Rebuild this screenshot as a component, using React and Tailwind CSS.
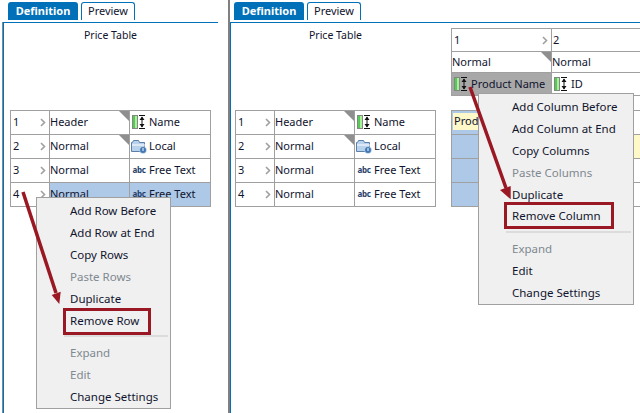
const font = { fontFamily: '"Noto Sans", "Liberation Sans", sans-serif' };

const rows = [
  { n: "1", type: "Header", icon: "resize", label: "Name", corner: true },
  { n: "2", type: "Normal", icon: "folder", label: "Local", corner: true },
  { n: "3", type: "Normal", icon: "abc", label: "Free Text" },
  { n: "4", type: "Normal", icon: "abc", label: "Free Text" },
];

const rowMenu = [
  [
    { label: "Add Row Before" },
    { label: "Add Row at End" },
    { label: "Copy Rows" },
    { label: "Paste Rows", off: true },
    { label: "Duplicate" },
    { label: "Remove Row", box: "w-[88px] -ml-[7px] pl-[4px]" },
  ],
  [
    { label: "Expand", off: true },
    { label: "Edit", off: true },
    { label: "Change Settings" },
  ],
];

const colMenu = [
  [
    { label: "Add Column Before" },
    { label: "Add Column at End" },
    { label: "Copy Columns" },
    { label: "Paste Columns", off: true },
    { label: "Duplicate" },
    { label: "Remove Column", box: "w-[110px] -ml-[8px] pl-[5px] -mt-[3px]" },
  ],
  [
    { label: "Expand", off: true },
    { label: "Edit" },
    { label: "Change Settings" },
  ],
];

function ResizeIcon() {
  return (
    <svg width="16" height="16" viewBox="0 0 16 16" className="shrink-0">
      <rect x="1.5" y="1.5" width="5" height="13" fill="#a8f09a" stroke="#808880" />
      <rect x="2" y="2" width="2" height="12" fill="#58c858" />
      <path d="M8 1.5h6M8 14.5h6M11 3v10" stroke="#111" fill="none" />
      <path d="M11 2.5L8.5 6h5zM11 13.5L8.5 10h5z" fill="#111" />
    </svg>
  );
}

function FolderIcon() {
  return (
    <svg width="16" height="16" viewBox="0 0 16 16" className="shrink-0">
      <path d="M0.5 4.5h1l1-2h5l1 2h5v9h-13z" fill="#b9d2ec" stroke="#5a7fa8" />
      <path d="M1 7h13" stroke="#fff" />
      <circle cx="12" cy="12" r="3.5" fill="#3f78b5" stroke="#fff" strokeWidth="0.5" />
      <path d="M12 10v3" stroke="#fff" />
    </svg>
  );
}

function AbcIcon() {
  return <span className="w-4 shrink-0 text-center text-[8px] font-bold leading-none tracking-[-0.3px] text-[#24406a]">abc</span>;
}

function Chevron() {
  return (
    <svg width="6" height="9" viewBox="0 0 6 9" className="shrink-0">
      <path d="M1 1l3.5 3.5L1 8" stroke="#a0a0a0" strokeWidth="1.6" fill="none" />
    </svg>
  );
}

function Corner() {
  return (
    <svg width="10" height="10" viewBox="0 0 10 10" className="absolute right-0 top-0">
      <path d="M0 0h10v10z" fill="#8f8f8f" />
    </svg>
  );
}

function Tabs({ className }) {
  return (
    <div className={`flex h-[22px] items-start pt-[2px] text-[#10142e] ${className}`} style={font}>
      <div className="flex h-[18px] w-[70px] items-center justify-center rounded-t-[3px] bg-[#0070b8] text-[11px] font-bold text-white">Definition</div>
      <div className="ml-[3px] flex h-[18px] w-[54px] items-center justify-center rounded-t-[3px] border border-b-0 border-[#0070b8] bg-white text-[11px]">Preview</div>
    </div>
  );
}

function Title() {
  return <div className="pt-[4px] text-center text-[10.5px] leading-4 text-[#10142e]" style={font}>Price Table</div>;
}

function RowsTable({ selected }) {
  return (
    <div className="grid w-[201px] grid-cols-[38px_79px_80px] auto-rows-[23px] gap-px bg-[#a0a0a0] p-px text-[11px] text-[#10142e]" style={font}>
      {rows.map((row, i) => {
        const hit = selected && i === 3;
        return [
          <div key={row.n + "a"} className="flex items-center justify-between bg-white pb-px pl-0.5 pr-[3px]">
            <span>{row.n}</span>
            <Chevron />
          </div>,
          <div key={row.n + "b"} className={`relative flex items-center pb-px ${hit ? "bg-[#aec8e8]" : "bg-white"}`}>
            {row.type}
            {row.corner ? <Corner /> : null}
          </div>,
          <div key={row.n + "c"} className={`flex items-center gap-0.5 pb-px pl-px ${hit ? "bg-[#aec8e8]" : "bg-white"}`}>
            {row.icon === "resize" ? <ResizeIcon /> : row.icon === "folder" ? <FolderIcon /> : <AbcIcon />}
            <span>{row.label}</span>
          </div>,
        ];
      })}
    </div>
  );
}

function ColumnsHead() {
  return (
    <div className="mt-[5px] grid w-[192px] grid-cols-[99px_91px] grid-rows-[22px_20px_22px] gap-px bg-[#a0a0a0] py-px pl-px text-[11px] text-[#10142e]" style={font}>
      <div className="flex items-center justify-between bg-white pl-0.5 pr-[3px]">
        <span>1</span>
        <Chevron />
      </div>
      <div className="flex items-center bg-white pl-px">2</div>
      <div className="relative flex items-center bg-white">
        Normal
        <Corner />
      </div>
      <div className="flex items-center bg-white">Normal</div>
      <div className="flex items-center gap-0.5 whitespace-nowrap bg-[#a8a8a8] pl-px">
        <ResizeIcon />
        <span>Product Name</span>
      </div>
      <div className="flex items-center gap-0.5 bg-white pl-px">
        <ResizeIcon />
        <span>ID</span>
      </div>
    </div>
  );
}

function ColumnsBody() {
  return (
    <div className="mt-[14px] grid w-[192px] grid-cols-[99px_91px] auto-rows-[23px] gap-px bg-[#a0a0a0] py-px pl-px text-[11px] text-[#10142e]" style={font}>
      <div className="bg-[#aec8e8] py-0.5 pl-px">
        <div className="h-[17px] overflow-hidden bg-[#fff8c8] pl-px leading-4">Product</div>
      </div>
      <div className="bg-white" />
      <div className="bg-[#aec8e8]" />
      <div className="bg-[#fff8c8]" />
      <div className="bg-[#aec8e8]" />
      <div className="bg-white" />
      <div className="bg-[#aec8e8]" />
      <div className="bg-white" />
    </div>
  );
}

function Menu({ groups, className }) {
  return (
    <div className={`absolute border border-[#a0a0a0] bg-[#f0f0f0] pt-[2px] text-[11.5px] text-[#10142e] ${className}`} style={font}>
      {groups.map((group, g) => (
        <div key={g} className={g ? "mt-[3px]" : ""}>
          {g ? <div className="mb-[5px] ml-[27px] mr-0.5 h-[2px] bg-[#dcdcdc]" /> : null}
          {group.map((item) => (
            <div key={item.label} className={`flex h-[22px] items-center pl-[33px] ${item.off ? "text-[#808890]" : ""}`}>
              {item.box ? (
                <span className={`flex h-[27px] shrink-0 items-center border-[3px] border-[#9a1824] ${item.box}`}>{item.label}</span>
              ) : (
                item.label
              )}
            </div>
          ))}
        </div>
      ))}
    </div>
  );
}

function Arrow({ className, line, head }) {
  return (
    <svg width="60" height="120" viewBox="0 0 60 120" className={`absolute ${className}`}>
      <path d={line} stroke="#9a1824" strokeWidth="3.5" fill="none" />
      <path d={head} fill="#9a1824" />
    </svg>
  );
}

export default function App() {
  return (
    <div className="relative flex h-[413px] w-[640px] overflow-hidden bg-white">
      <section className="w-[228px] shrink-0">
        <Tabs className="pl-[8px]" />
        <div className="ml-[2px] h-[391px] border-l border-[#808890]">
          <div className="mr-[10px] h-full border-l border-t border-[#0070b8]">
            <div className="ml-[6px] w-[201px]">
              <Title />
            </div>
            <div className="ml-[6px] mt-[67px]">
              <RowsTable selected />
            </div>
          </div>
        </div>
      </section>

      <section className="flex-1 border-l-2 border-[#808080]">
        <Tabs className="pl-[4px]" />
        <div className="flex h-[391px] border-l border-t border-[#0070b8]">
          <div className="ml-[4px] w-[201px] shrink-0">
            <Title />
            <div className="mt-[67px]">
              <RowsTable />
            </div>
          </div>
          <div className="ml-[15px] flex-1">
            <ColumnsHead />
            <ColumnsBody />
          </div>
        </div>
      </section>

      <Menu groups={rowMenu} className="left-[36px] top-[197px] w-[135px]" />
      <Menu groups={colMenu} className="left-[478px] top-[93px] w-[156px]" />

      <Arrow className="left-[14px] top-[188px]" line="M9 4L42 105" head="M45.3 116L37.7 107L46.7 103.7z" />
      <Arrow className="left-[462px] top-[82px]" line="M8 5L44 106" head="M48.7 117.3L38 108L48.7 104z" />
    </div>
  );
}
